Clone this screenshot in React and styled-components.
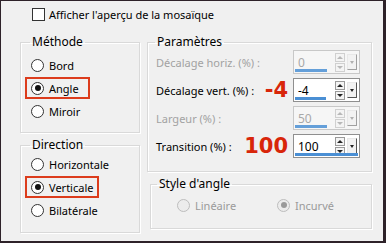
import React from 'react';
import styled, { createGlobalStyle } from 'styled-components';

const GlobalStyle = createGlobalStyle`
  html, body {
    margin: 0;
    padding: 0;
    background: #f0f0f0;
  }
  body {
    font-family: "Noto Sans", "Open Sans", sans-serif;
    font-size: 11px;
    color: #000;
  }
`;

const Window = styled.div`
  width: 386px;
  height: 243px;
  box-sizing: border-box;
  background: #f0f0f0;
  border-style: solid;
  border-color: #2e2229;
  border-width: 1px 3px 2px 1px;
  overflow: hidden;
`;

const Header = styled.label`
  display: flex;
  align-items: center;
  gap: 4px;
  height: 15px;
  margin: 6px 0 0 31px;
  line-height: 15px;
`;

const CheckBox = styled.span`
  width: 11px;
  height: 11px;
  border: 1px solid #333;
  background: #fff;
`;

const Columns = styled.div`
  display: grid;
  grid-template-columns: 120px 225px;
  column-gap: 7px;
  margin: 12px 0 0 19px;
`;

const Column = styled.div`
  display: flex;
  flex-direction: column;
  gap: 4px;
`;

const Group = styled.fieldset`
  box-sizing: border-box;
  height: ${(p) => p.$h}px;
  margin: 0 0 0 ${(p) => p.$indent || 0}px;
  padding: ${(p) => p.$pt || 0}px 0 0 ${(p) => p.$pl ?? 4}px;
  min-width: 0;
  border: 1px solid #d9d9d9;
  box-shadow: inset 1px 1px 0 #fff, 1px 1px 0 #fff;
`;

const Legend = styled.legend`
  margin-left: ${(p) => p.$ml || 5}px;
  padding: 0 2px;
  line-height: 16px;
  font-size: 12px;
`;

const RadioList = styled.div`
  display: flex;
  flex-direction: column;
  align-items: flex-start;
  gap: 1px;
`;

const RadioRow = styled.label`
  display: inline-flex;
  align-items: center;
  gap: 5px;
  box-sizing: border-box;
  width: ${(p) => (p.$w ? `${p.$w}px` : 'auto')};
  height: 22px;
  padding: 0 4px;
  border: 2px solid ${(p) => (p.$marked ? '#dc3c1c' : 'transparent')};
  color: ${(p) => (p.$disabled ? '#9a9a9a' : '#000')};
  white-space: nowrap;
`;

const Radio = styled.span`
  position: relative;
  width: 11px;
  height: 11px;
  border-radius: 50%;
  border: 1px solid ${(p) => (p.$disabled ? '#bdbdbd' : '#333')};
  background: ${(p) => (p.$disabled ? '#ececec' : '#fff')};
  flex-shrink: 0;

  &::after {
    content: '';
    display: ${(p) => (p.$checked ? 'block' : 'none')};
    position: absolute;
    left: 2.5px;
    top: 2.5px;
    width: 6px;
    height: 6px;
    border-radius: 50%;
    background: ${(p) => (p.$disabled ? '#9a9a9a' : '#111')};
  }
`;

const ParamRows = styled.div`
  display: flex;
  flex-direction: column;
  margin: -2px 11px 0 8px;
`;

const ParamRow = styled.div`
  display: flex;
  align-items: center;
  height: 28px;
`;

const ParamLabel = styled.span`
  flex: 1;
  min-width: 0;
  white-space: nowrap;
  color: ${(p) => (p.$disabled ? '#a2a2a2' : '#000')};
`;

const Note = styled.span`
  margin-right: 5px;
  font-family: "DejaVu Sans", sans-serif;
  font-weight: 700;
  font-size: 21px;
  line-height: 20px;
  color: #d8260a;
`;

const Spinner = styled.div`
  position: relative;
  display: flex;
  align-items: center;
  box-sizing: border-box;
  width: 67px;
  height: 24px;
  padding: 0 2px 0 0;
  border: 1px solid ${(p) => (p.$disabled ? '#c8c8c8' : '#8f8f8f')};
  background: ${(p) => (p.$disabled ? '#f6f6f6' : '#fff')};
`;

const Value = styled.span`
  flex: 1;
  padding-left: 4px;
  font-size: 12px;
  color: ${(p) => (p.$disabled ? '#a8a8a8' : '#000')};
`;

const Bar = styled.span`
  position: absolute;
  left: 1px;
  bottom: 1px;
  height: 3px;
  background: #4a8fd4;
  opacity: ${(p) => (p.$disabled ? 0.85 : 1)};
`;

const SpinButtons = styled.span`
  display: flex;
  flex-direction: column;
  gap: 1px;
  margin-right: 2px;
`;

const SpinButton = styled.span`
  display: flex;
  align-items: center;
  justify-content: center;
  width: 8px;
  height: 7px;
  border: 1px solid ${(p) => (p.$disabled ? '#d0d0d0' : '#9a9a9a')};
  background: #f4f4f4;

  &::before {
    content: '';
    border-left: 3px solid transparent;
    border-right: 3px solid transparent;
    ${(p) => (p.$up ? 'border-bottom' : 'border-top')}: 3px solid ${(p) => (p.$disabled ? '#b8b8b8' : '#222')};
  }
`;

const DropButton = styled.span`
  display: flex;
  align-items: center;
  justify-content: center;
  box-sizing: border-box;
  width: 10px;
  height: 16px;
  background: #f2f2f2;
  border: 1px solid #e8e8e8;
  border-right-color: ${(p) => (p.$disabled ? '#a0a0a0' : '#555')};
  border-bottom-color: ${(p) => (p.$disabled ? '#a0a0a0' : '#555')};

  &::before {
    content: '';
    border-left: 2.5px solid transparent;
    border-right: 2.5px solid transparent;
    border-top: 3px solid ${(p) => (p.$disabled ? '#b0b0b0' : '#222')};
  }
`;

const StyleRow = styled.div`
  display: grid;
  grid-template-columns: 100px auto;
  margin-left: 20px;
`;

function Spin({ value, pct, disabled }) {
  return (
    <Spinner $disabled={disabled}>
      <Value $disabled={disabled}>{value}</Value>
      <SpinButtons>
        <SpinButton $up $disabled={disabled} />
        <SpinButton $disabled={disabled} />
      </SpinButtons>
      <DropButton $disabled={disabled} />
      <Bar $disabled={disabled} style={{ width: `${pct}%` }} />
    </Spinner>
  );
}

const params = [
  { label: 'Décalage horiz. (%) :', value: '0', pct: 49, disabled: true },
  { label: 'Décalage vert. (%) :', value: '-4', pct: 48, note: '-4' },
  { label: 'Largeur (%) :', value: '50', pct: 49, disabled: true },
  { label: 'Transition (%) :', value: '100', pct: 97, note: '100' },
];

export default function App() {
  return (
    <>
      <GlobalStyle />
      <Window>
        <Header>
          <CheckBox />
          Afficher l'aperçu de la mosaïque
        </Header>
        <Columns>
          <Column>
            <Group $h={99} $pt={4}>
              <Legend>Méthode</Legend>
              <RadioList>
                <RadioRow><Radio />Bord</RadioRow>
                <RadioRow $marked $w={65}><Radio $checked />Angle</RadioRow>
                <RadioRow><Radio />Miroir</RadioRow>
              </RadioList>
            </Group>
            <Group $h={96}>
              <Legend>Direction</Legend>
              <RadioList>
                <RadioRow><Radio />Horizontale</RadioRow>
                <RadioRow $marked $w={74}><Radio $checked />Verticale</RadioRow>
                <RadioRow><Radio />Bilatérale</RadioRow>
              </RadioList>
            </Group>
          </Column>
          <Column>
            <Group $h={138} $pl={0}>
              <Legend $ml={7}>Paramètres</Legend>
              <ParamRows>
                {params.map((p) => (
                  <ParamRow key={p.label}>
                    <ParamLabel $disabled={p.disabled}>{p.label}</ParamLabel>
                    {p.note && <Note>{p.note}</Note>}
                    <Spin value={p.value} pct={p.pct} disabled={p.disabled} />
                  </ParamRow>
                ))}
              </ParamRows>
            </Group>
            <Group $h={53} $pt={2} $pl={0} $indent={3}>
              <Legend $ml={6}>Style d'angle</Legend>
              <StyleRow>
                <RadioRow $disabled><Radio $disabled />Linéaire</RadioRow>
                <RadioRow $disabled><Radio $disabled $checked />Incurvé</RadioRow>
              </StyleRow>
            </Group>
          </Column>
        </Columns>
      </Window>
    </>
  );
}
